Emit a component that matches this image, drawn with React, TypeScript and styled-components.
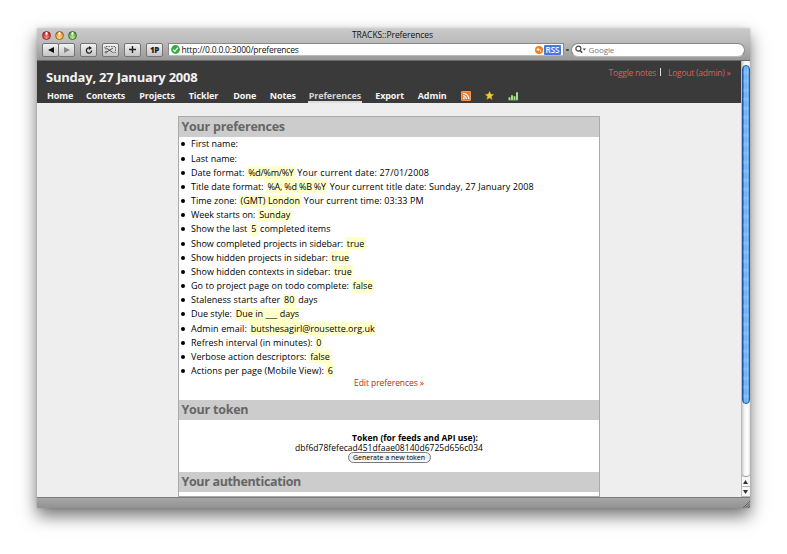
import React from "react";
import styled, { createGlobalStyle } from "styled-components";

const Global = createGlobalStyle`
  * { box-sizing: border-box; }
  body { margin: 0; background: #fff; overflow: hidden; }
  body, button { font-family: "Open Sans", "Noto Sans", sans-serif; }
`;

const Desktop = styled.div`
  width: 787px;
  height: 554px;
  padding: 28px 37px 46px;
  overflow: hidden;
`;

const Window = styled.div`
  display: flex;
  flex-direction: column;
  width: 713px;
  height: 480px;
  box-shadow: 0 8px 16px rgba(0, 0, 0, 0.55), 0 0 3px rgba(0, 0, 0, 0.12);
`;

const Chrome = styled.div`
  height: 33px;
  flex: none;
  background: linear-gradient(#c9c9c9 0, #bcbcbc 40%, #999 100%);
  border-top: 1px solid #d0d0d0;
  border-bottom: 1px solid #6a6a6a;
`;

const TitleBar = styled.div`
  display: flex;
  align-items: center;
  height: 12px;
  padding-left: 5px;
`;

const Lights = styled.div`
  display: flex;
  gap: 4px;
  width: 310px;
`;

const Light = styled.span<{ $dark: string; $mid: string; $glow: string }>`
  width: 9px;
  height: 9px;
  border-radius: 50%;
  border: 1px solid ${(p) => p.$dark};
  background: radial-gradient(ellipse at 50% 15%, #fff 0 10%, transparent 40%),
    radial-gradient(circle at 50% 90%, ${(p) => p.$glow}, ${(p) => p.$mid} 60%, ${(p) => p.$dark});
`;

const WindowTitle = styled.span`
  font-size: 8.5px;
  line-height: 12px;
  letter-spacing: -0.07px;
  color: #111;
`;

const Toolbar = styled.div`
  display: flex;
  align-items: center;
  height: 15px;
  padding-left: 5px;
  margin-top: 1px;
`;

const ButtonGroup = styled.div`
  display: flex;
  margin-right: 5px;
`;

const ToolButton = styled.button`
  display: flex;
  align-items: center;
  justify-content: center;
  width: 17px;
  height: 14px;
  padding: 0;
  border: 1px solid #747474;
  border-radius: 2px;
  background: linear-gradient(#f3f3f3, #c4c4c4);
  font-size: 8px;
  font-weight: 800;
  letter-spacing: -0.4px;
  color: #222;
  & + & { margin-left: -1px; }
`;

const AddressField = styled.div`
  display: flex;
  align-items: center;
  width: 396px;
  height: 13px;
  padding: 0 2px;
  border: 1px solid #888;
  border-bottom-color: #bbb;
  background: #fff;
`;

const AddressText = styled.span`
  flex: 1;
  margin-left: 1.5px;
  font-size: 8.5px;
  line-height: 11px;
  letter-spacing: -0.2px;
  color: #111;
`;

const RssBadge = styled.span`
  width: 17px;
  height: 10px;
  margin-left: 1.5px;
  border-radius: 1px;
  background: #4a76e4;
  color: #fff;
  font-size: 8px;
  font-weight: 600;
  line-height: 10px;
  text-align: center;
`;

const Dot = styled.span`
  width: 3px;
  height: 2px;
  margin: 0 2px 0 1.5px;
  border-radius: 1px;
  background: #444;
`;

const SearchField = styled.div`
  display: flex;
  align-items: center;
  width: 174px;
  height: 14px;
  padding-left: 3px;
  border: 1px solid #888;
  border-bottom-color: #bbb;
  border-radius: 7px;
  background: #fff;
  color: #777;
  font-size: 8px;
  line-height: 12px;
  letter-spacing: -0.1px;
  svg { margin-right: 3px; }
`;

const Viewport = styled.div`
  display: flex;
  flex: 1;
  min-height: 0;
`;

const Page = styled.div`
  flex: 1;
  display: flex;
  flex-direction: column;
  overflow: hidden;
  background: #eee;
`;

const Header = styled.header`
  height: 42px;
  flex: none;
  background: #3a3a3a;
  color: #f2f2f2;
`;

const HeaderTop = styled.div`
  display: flex;
  justify-content: space-between;
  height: 29px;
  padding: 7px 10px 0 9px;
`;

const PageDate = styled.h1`
  margin: 0;
  font-size: 13px;
  font-weight: 700;
  line-height: 18px;
  letter-spacing: -0.22px;
`;

const Account = styled.div`
  display: flex;
  font-size: 8.5px;
  line-height: 9px;
`;

const AccountLink = styled.a`
  color: #de5c60;
  letter-spacing: -0.24px;
`;

const Separator = styled.span`
  width: 1px;
  height: 8px;
  margin: 0 7px 0 4px;
  background: #ddd;
`;

const Nav = styled.nav`
  display: grid;
  grid-template-columns: 39px 53.2px 49.5px 44.5px 36.5px 39px 66.5px 42.5px 43px 24px 23px 12px;
  align-items: start;
  justify-items: start;
  height: 13px;
  padding-left: 9.5px;
`;

const NavLink = styled.a<{ $active?: boolean }>`
  height: 13px;
  padding: 0 0.5px;
  border-bottom: 2px solid ${(p) => (p.$active ? "#ddd" : "transparent")};
  font-size: 9px;
  font-weight: 700;
  line-height: 11px;
  letter-spacing: -0.1px;
  color: ${(p) => (p.$active ? "#d4d4d4" : "#f4f4f4")};
`;

const NavIcon = styled.svg`
  display: block;
  margin: 0.5px 0 0 0.5px;
`;

const Panel = styled.main`
  width: 422px;
  height: 420px;
  margin: 13px 0 0 141px;
  border: 1px solid #aaa;
  background: #fff;
`;

const Heading = styled.h2<{ $tight?: boolean }>`
  height: 20px;
  margin: 0;
  padding-left: 2.5px;
  background: #ccc;
  color: #666;
  font-size: 12.5px;
  font-weight: 700;
  line-height: 20px;
  letter-spacing: ${(p) => (p.$tight ? "-0.35px" : "-0.24px")};
`;

const PrefList = styled.ul`
  margin: 0;
  padding: 0.4px 0 0 2px;
  list-style: none;
`;

const PrefRow = styled.li`
  display: flex;
  align-items: center;
  height: 14.16px;
  font-size: 9px;
  line-height: 14px;
  white-space: nowrap;
  color: #000;
  &::before {
    content: "";
    width: 4px;
    height: 4px;
    margin-right: 6px;
    border-radius: 50%;
    background: #000;
  }
`;

const Piece = styled.span<{ $track?: number }>`
  letter-spacing: ${(p) => p.$track ?? 0.02}px;
`;

const Value = styled(Piece)`
  margin: 0 2.6px;
  padding: 0 1.2px;
  background: linear-gradient(#ffc, #ffc) center / 100% 13px no-repeat;
`;

const EditLink = styled.a`
  display: block;
  height: 22px;
  color: #c22;
  font-size: 8.5px;
  line-height: 10px;
  letter-spacing: -0.07px;
  text-align: center;
`;

const TokenSection = styled.section`
  display: flex;
  flex-direction: column;
  align-items: center;
  height: 52px;
  padding-top: 12.5px;
  color: #000;
`;

const TokenLabel = styled.strong`
  margin-left: 52px;
  font-size: 8.5px;
  line-height: 10px;
  letter-spacing: 0.01px;
`;

const TokenText = styled.span`
  font-size: 8.5px;
  line-height: 9px;
  letter-spacing: 0.035px;
`;

const TokenButton = styled.button`
  width: 83px;
  height: 11px;
  margin-top: 0.5px;
  padding: 0;
  border: 1px solid #777;
  border-radius: 6px;
  background: linear-gradient(#fff, #e8e8e8 50%, #fff);
  font-size: 7px;
  font-weight: 500;
  line-height: 8px;
  color: #000;
`;

const ScrollBar = styled.div`
  display: flex;
  flex-direction: column;
  width: 9.5px;
  border-left: 1px solid #bbb;
  background: linear-gradient(90deg, #ccc, #f4f4f4 30%, #fff 70%, #e2e2e2);
`;

const Thumb = styled.div`
  height: 339px;
  margin-top: 4px;
  border: 1px solid #2458a8;
  border-radius: 5px;
  background: repeating-linear-gradient(transparent 0 4px, rgba(255, 255, 255, 0.16) 6px, transparent 9px),
    linear-gradient(90deg, #1f63c8, #91c4f5 30%, #62aaf2 50%, #6ebcfa 70%, #8fd2ff 85%, #2869c4);
`;

const Track = styled.div`
  flex: 1;
  border-bottom: 1px solid #999;
  border-radius: 0 0 5px 5px;
`;

const ScrollArrow = styled.div`
  display: flex;
  align-items: center;
  justify-content: center;
  height: 10px;
  border-bottom: 1px solid #bbb;
  background: #f6f6f6;
`;

const StatusBar = styled.footer`
  display: flex;
  justify-content: flex-end;
  align-items: flex-end;
  height: 11px;
  flex: none;
  border-top: 1px solid #7c7c7c;
  background: linear-gradient(#a6a6a6, #929292);
`;

type Pref = { label: string; value?: string; tail?: string; track?: number; valueTrack?: number; tailTrack?: number };

const prefs: Pref[] = [
  { label: "First name:" },
  { label: "Last name:" },
  { label: "Date format:", value: "%d/%m/%Y", tail: "Your current date: 27/01/2008", valueTrack: -0.3, tailTrack: 0.18 },
  { label: "Title date format:", value: "%A, %d %B %Y", tail: "Your current title date: Sunday, 27 January 2008", valueTrack: -0.22, tailTrack: 0.085 },
  { label: "Time zone:", value: "(GMT) London", tail: "Your current time: 03:33 PM", tailTrack: 0.08 },
  { label: "Week starts on:", value: "Sunday", track: -0.03 },
  { label: "Show the last", value: "5", tail: "completed items" },
  { label: "Show completed projects in sidebar:", value: "true", track: 0 },
  { label: "Show hidden projects in sidebar:", value: "true", track: 0 },
  { label: "Show hidden contexts in sidebar:", value: "true" },
  { label: "Go to project page on todo complete:", value: "false", track: 0.04 },
  { label: "Staleness starts after", value: "80", tail: "days", track: 0.06 },
  { label: "Due style:", value: "Due in ___ days", track: -0.02 },
  { label: "Admin email:", value: "butshesagirl@rousette.org.uk", track: 0.08, valueTrack: 0 },
  { label: "Refresh interval (in minutes):", value: "0", track: 0.04 },
  { label: "Verbose action descriptors:", value: "false", track: 0.04 },
  { label: "Actions per page (Mobile View):", value: "6", track: 0.07 },
];

const navItems = ["Home", "Contexts", "Projects", "Tickler", "Done", "Notes", "Preferences", "Export", "Admin"];

export default function App() {
  return (
    <>
      <Global />
      <Desktop>
        <Window>
          <Chrome>
            <TitleBar>
              <Lights>
                <Light $dark="#8e2424" $mid="#e0322e" $glow="#ff9a90" />
                <Light $dark="#9a6424" $mid="#efa038" $glow="#ffe58a" />
                <Light $dark="#3c7028" $mid="#62b544" $glow="#c8f59a" />
              </Lights>
              <WindowTitle>TRACKS::Preferences</WindowTitle>
            </TitleBar>
            <Toolbar>
              <ButtonGroup>
                <ToolButton aria-label="Back">
                  <svg width="6" height="6"><path d="M0 3 6 0V6Z" fill="#111" /></svg>
                </ToolButton>
                <ToolButton aria-label="Forward">
                  <svg width="6" height="6"><path d="M6 3 0 0V6Z" fill="#888" /></svg>
                </ToolButton>
              </ButtonGroup>
              <ButtonGroup>
                <ToolButton aria-label="Reload">
                  <svg width="8" height="8" viewBox="0 0 8 8">
                    <path d="M6.6 4.5A2.6 2.6 0 1 1 4.2 1.9" fill="none" stroke="#222" strokeWidth="1.3" />
                    <path d="M4 0 7 2 4 3.9Z" fill="#222" />
                  </svg>
                </ToolButton>
              </ButtonGroup>
              <ButtonGroup>
                <ToolButton aria-label="Clip">
                  <svg width="13" height="9" viewBox="0 0 13 9" fill="none" stroke="#444">
                    <path d="M1 3V1.5H11.5V7.5H8.5" strokeDasharray="1.5 1" strokeWidth=".8" />
                    <path d="M3 3.5 8.5 7.3M3 6.8 9 3" strokeWidth=".9" />
                    <circle cx="2" cy="7.2" r=".9" strokeWidth=".7" />
                    <circle cx="2" cy="3.6" r=".7" strokeWidth=".6" />
                  </svg>
                </ToolButton>
              </ButtonGroup>
              <ButtonGroup>
                <ToolButton aria-label="Add bookmark">
                  <svg width="7" height="7"><path d="M3.5 0V7M0 3.5H7" stroke="#222" strokeWidth="1.4" /></svg>
                </ToolButton>
              </ButtonGroup>
              <ButtonGroup>
                <ToolButton>1P</ToolButton>
              </ButtonGroup>
              <AddressField>
                <svg width="9" height="9" viewBox="0 0 9 9">
                  <circle cx="4.5" cy="4.5" r="4.4" fill="#2fae3c" />
                  <path d="M2.2 4.6 3.9 6.4 6.8 2.6" fill="none" stroke="#fff" strokeWidth="1.2" />
                </svg>
                <AddressText>http://0.0.0.0:3000/preferences</AddressText>
                <svg width="8" height="8" viewBox="0 0 8 8">
                  <circle cx="4" cy="4" r="4" fill="#f57c14" />
                  <path d="M1.2 3.6 3.6 1.7V5.5Z" fill="#fff" />
                  <path d="M3 3.6H4.6Q6.2 3.8 5.6 5.6" fill="none" stroke="#fff" strokeWidth=".9" />
                </svg>
                <RssBadge>RSS</RssBadge>
              </AddressField>
              <Dot />
              <SearchField>
                <svg width="11" height="9" viewBox="0 0 11 9">
                  <circle cx="3.4" cy="3.6" r="2.5" fill="none" stroke="#444" strokeWidth="1.2" />
                  <path d="M5.2 5.4 7.2 7.8" stroke="#444" strokeWidth="1.5" />
                  <path d="M7.6 3.6H11L9.3 5.6Z" fill="#444" />
                </svg>
                Google
              </SearchField>
            </Toolbar>
          </Chrome>
          <Viewport>
            <Page>
              <Header>
                <HeaderTop>
                  <PageDate>Sunday, 27 January 2008</PageDate>
                  <Account>
                    <AccountLink>Toggle notes</AccountLink>
                    <Separator />
                    <AccountLink>Logout (admin) »</AccountLink>
                  </Account>
                </HeaderTop>
                <Nav>
                  {navItems.map((item) => (
                    <NavLink key={item} $active={item === "Preferences"}>{item}</NavLink>
                  ))}
                  <NavIcon width="10" height="10" viewBox="0 0 10 10">
                    <rect width="10" height="10" rx="1.2" fill="#ef7b32" />
                    <rect x=".5" y=".5" width="9" height="9" rx="1" fill="none" stroke="#f8a468" strokeWidth=".7" />
                    <circle cx="2.8" cy="7.2" r="1" fill="#fff" />
                    <path d="M1.9 4.6A3.5 3.5 0 0 1 5.4 8.1M1.9 2.2A5.9 5.9 0 0 1 7.8 8.1" fill="none" stroke="#fff" strokeWidth="1.1" />
                  </NavIcon>
                  <NavIcon width="9" height="9" viewBox="0 0 9 9">
                    <path d="M4.5.3 5.8 3.1 8.8 3.4 6.5 5.4 7.2 8.5 4.5 6.9 1.8 8.5 2.5 5.4.2 3.4 3.2 3.1Z" fill="#f2cd2d" stroke="#b58e16" strokeWidth=".4" />
                  </NavIcon>
                  <NavIcon width="11" height="10" viewBox="0 0 11 10">
                    <path d="M1.5 9V6.3M4 9V4.3M6.5 9V5.3M9 9V1.3" stroke="#a9e38e" strokeWidth="1.9" />
                    <path d="M.5 9.2H10.2" stroke="#7fbf6a" strokeWidth=".6" />
                  </NavIcon>
                </Nav>
              </Header>
              <Panel>
                <Heading>Your preferences</Heading>
                <PrefList>
                  {prefs.map((p) => (
                    <PrefRow key={p.label}>
                      <Piece $track={p.track}>{p.label}</Piece>
                      {p.value && <Value $track={p.valueTrack}>{p.value}</Value>}
                      {p.tail && <Piece $track={p.tailTrack}>{p.tail}</Piece>}
                    </PrefRow>
                  ))}
                </PrefList>
                <EditLink>Edit preferences »</EditLink>
                <Heading>Your token</Heading>
                <TokenSection>
                  <TokenLabel>Token (for feeds and API use):</TokenLabel>
                  <TokenText>dbf6d78fefecad451dfaae08140d6725d656c034</TokenText>
                  <TokenButton>Generate a new token</TokenButton>
                </TokenSection>
                <Heading $tight>Your authentication</Heading>
              </Panel>
            </Page>
            <ScrollBar>
              <Thumb />
              <Track />
              <ScrollArrow>
                <svg width="5" height="4"><path d="M2.5 0 5 4H0Z" fill="#333" /></svg>
              </ScrollArrow>
              <ScrollArrow>
                <svg width="5" height="4"><path d="M2.5 4 0 0H5Z" fill="#333" /></svg>
              </ScrollArrow>
            </ScrollBar>
          </Viewport>
          <StatusBar>
            <svg width="8" height="8">
              <path d="M1 8 8 1M3.5 8 8 3.5M6 8 8 6" stroke="#555" strokeWidth=".8" />
            </svg>
          </StatusBar>
        </Window>
      </Desktop>
    </>
  );
}
